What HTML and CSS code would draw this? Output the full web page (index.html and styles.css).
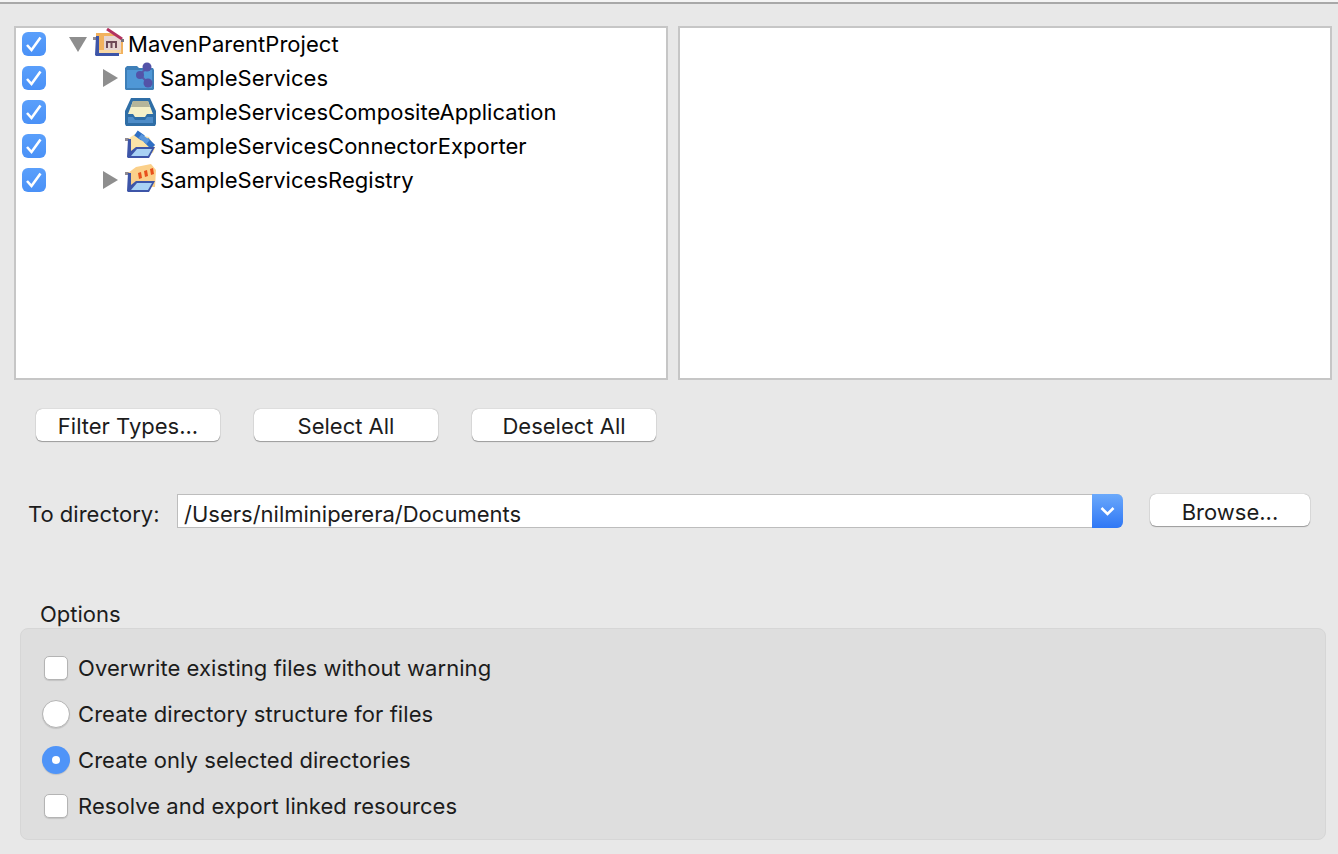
FILE: index.html
```html
<!DOCTYPE html>
<html lang="en">
<head>
	<meta charset="UTF-8">
	<meta name="viewport" content="width=device-width, initial-scale=1.0">
	<title>Export</title>
	<link rel="stylesheet" href="styles.css">
</head>
<body>
	<div class="top-line"></div>

	<div class="panes">
		<div class="pane tree">
			<div class="tree-row">
				<span class="check"><svg viewBox="0 0 24 24"><path d="M5 13l4.5 5L18.5 5.5"/></svg></span>
				<span class="twisty level-0"><span class="arrow-down"></span></span>
				<svg class="file-icon" viewBox="0 0 32 32">
					<path d="M0 9h4v3H0z" fill="#8f8a92"/>
					<path d="M3 5h14l13 6v15H3z" fill="#f2b25e"/>
					<path d="M11 8h12l5 4v11H11z" fill="#e6d5d2"/>
					<path d="M14 1l15 10" stroke="#b3315f" stroke-width="3" fill="none"/>
					<path d="M13 13h11v7h-2v-5h-2.5v5h-2v-5H15v5h-2z" fill="#6e4a58"/>
					<path d="M28 11h3v3h-3z" fill="#77707a"/>
					<path d="M6 22h22v3H6z" fill="#f8d7a4"/>
					<path d="M3 8h3v17h20v3H3l-1-1z" fill="#3d55a8"/>
				</svg>
				<span class="name">MavenParentProject</span>
			</div>
			<div class="tree-row">
				<span class="check"><svg viewBox="0 0 24 24"><path d="M5 13l4.5 5L18.5 5.5"/></svg></span>
				<span class="twisty level-1"><span class="arrow-right"></span></span>
				<svg class="file-icon" viewBox="0 0 32 32">
					<path d="M0 6l2-2h10l2 2h14l1 2v19l-1 1H1l-1-1z" fill="#3e7fb8"/>
					<path d="M2 8h25v18H2z" fill="#4f97d6"/>
					<path d="M22 5l-7 8 8 8" fill="none" stroke="#5a5aa8" stroke-width="2"/>
					<circle cx="22" cy="5" r="4.5" fill="#5353a8"/>
					<circle cx="15" cy="13" r="4" fill="#5353a8"/>
					<circle cx="23" cy="21" r="4.5" fill="#5353a8"/>
				</svg>
				<span class="name">SampleServices</span>
			</div>
			<div class="tree-row">
				<span class="check"><svg viewBox="0 0 24 24"><path d="M5 13l4.5 5L18.5 5.5"/></svg></span>
				<span class="twisty level-1"></span>
				<svg class="file-icon" viewBox="0 0 32 32">
					<path d="M6 2h19l6 13v13l-1 2H1l-1-2V15z" fill="#2f6ea6"/>
					<path d="M8 5h15l5 13h-6l-2 3H10l-2-3H3z" fill="#f5f0c8"/>
					<path d="M8 5h15l2 6H6z" fill="#b5b59a"/>
					<path d="M3 21h5l2 3h10l2-3h6v6H3z" fill="#4d8cc8"/>
				</svg>
				<span class="name">SampleServicesCompositeApplication</span>
			</div>
			<div class="tree-row">
				<span class="check"><svg viewBox="0 0 24 24"><path d="M5 13l4.5 5L18.5 5.5"/></svg></span>
				<span class="twisty level-1"></span>
				<svg class="file-icon" viewBox="0 0 32 32">
					<path d="M0 8h4v3H0z" fill="#8f8a92"/>
					<path d="M3 9l7-5 14 3 6 11-2 5H4z" fill="#fbe3a8"/>
					<path d="M11 3l7 5" stroke="#2f6fc4" stroke-width="6" fill="none"/>
					<path d="M21 10l7 7" stroke="#2f6fc4" stroke-width="6" fill="none"/>
					<path d="M15 6l8 6" stroke="#5a97de" stroke-width="5" fill="none"/>
					<path d="M3 9h3v12l5-4h19l-6 11H3l-1-1z" fill="#3d55a8"/>
					<path d="M12 19h15l-4 7H6z" fill="#a9d2f4"/>
				</svg>
				<span class="name">SampleServicesConnectorExporter</span>
			</div>
			<div class="tree-row">
				<span class="check"><svg viewBox="0 0 24 24"><path d="M5 13l4.5 5L18.5 5.5"/></svg></span>
				<span class="twisty level-1"><span class="arrow-right"></span></span>
				<svg class="file-icon" viewBox="0 0 32 32">
					<path d="M0 8h4v3H0z" fill="#8f8a92"/>
					<path d="M3 9l8-6 15-3 5 6-1 17H4z" fill="#fbd08a"/>
					<path d="M13 9l3-1 1 6-3 1zM19 7l3-1 1 6-3 1zM25 5l3-1 1 6-3 1z" fill="#e8501c"/>
					<path d="M3 9h3v12l5-4h19l-6 11H3l-1-1z" fill="#3d55a8"/>
					<path d="M12 19h15l-4 7H6z" fill="#a9d2f4"/>
				</svg>
				<span class="name">SampleServicesRegistry</span>
			</div>
		</div>
		<div class="pane"></div>
	</div>

	<div class="button-row">
		<button class="btn">Filter Types...</button>
		<button class="btn">Select All</button>
		<button class="btn">Deselect All</button>
	</div>

	<div class="directory-row">
		<label class="directory-label">To directory:</label>
		<div class="combo">
			<span class="combo-value">/Users/nilminiperera/Documents</span>
			<span class="combo-arrow"><svg viewBox="0 0 31 34"><path d="M9.5 14l6 6 6-6"/></svg></span>
		</div>
		<button class="btn browse">Browse...</button>
	</div>

	<div class="options-title">Options</div>
	<div class="options">
		<div class="option"><span class="box"></span>Overwrite existing files without warning</div>
		<div class="option"><span class="radio"></span>Create directory structure for files</div>
		<div class="option"><span class="radio on"></span>Create only selected directories</div>
		<div class="option"><span class="box"></span>Resolve and export linked resources</div>
	</div>
</body>
</html>
```

FILE: styles.css
```css
html, body {
	margin: 0;
	padding: 0;
	background-color: #e8e8e8;
	font-family: Inter, "Liberation Sans", sans-serif;
	font-size: 22px;
	color: #1c1c1c;
}

body {
	width: 1338px;
	height: 854px;
	overflow: hidden;
}

.top-line {
	height: 2px;
	border-bottom: 2px solid #a8a8a8;
	background-color: #f4f4f4;
}

/* tree + empty list */
.panes {
	display: flex;
	gap: 10px;
	padding: 22px 6px 0 14px;
}

.pane {
	flex: 1;
	height: 350px;
	background-color: #fff;
	border: 2px solid #c6c6c6;
}

.tree-row {
	display: flex;
	align-items: center;
	height: 34px;
	padding-left: 6px;
	color: #000;
}

.tree-row:first-child {
	margin-top: -1px;
}

.check {
	display: block;
	width: 24px;
	height: 24px;
	border-radius: 6px;
	background: linear-gradient(#5a9ffb, #4a91f7);
}

.check svg {
	display: block;
	width: 24px;
	height: 24px;
	fill: none;
	stroke: #fff;
	stroke-width: 2.6;
}

.twisty {
	display: flex;
	align-items: center;
	width: 24px;
	height: 24px;
}

.level-0 {
	margin-left: 23px;
}

.level-1 {
	margin-left: 57px;
	width: 22px;
}

.arrow-down {
	width: 0;
	height: 0;
	border-left: 9px solid transparent;
	border-right: 9px solid transparent;
	border-top: 15px solid #8e8e8e;
}

.arrow-right {
	width: 0;
	height: 0;
	border-top: 9.5px solid transparent;
	border-bottom: 9.5px solid transparent;
	border-left: 15px solid #8e8e8e;
}

.file-icon {
	width: 32px;
	height: 32px;
	flex: none;
	filter: blur(0.4px);
}

.name {
	margin-left: 3px;
	letter-spacing: 0.03px;
}

/* buttons */
.button-row {
	display: flex;
	gap: 34px;
	padding: 29px 0 0 36px;
}

.btn {
	width: 184px;
	height: 32px;
	padding: 1px 0 0;
	border: 0;
	border-radius: 6px;
	background-color: #fff;
	box-shadow: 0 0 1px rgba(0, 0, 0, 0.45), 0 1px 1px rgba(0, 0, 0, 0.3);
	font: inherit;
	color: #1c1c1c;
}

.directory-row {
	display: flex;
	align-items: center;
	height: 34px;
	margin-top: 53px;
	padding-left: 28px;
}

.directory-label {
	width: 149px;
	padding-top: 5px;
}

.combo {
	display: flex;
	align-items: center;
	width: 946px;
	height: 34px;
	box-sizing: border-box;
	border: 1px solid #bdbdbd;
	border-right: 0;
	border-radius: 0 6px 6px 0;
	background-color: #fff;
}

.combo-value {
	flex: 1;
	padding: 5px 0 0 6px;
}

.combo-arrow {
	width: 31px;
	height: 34px;
	margin-top: -1px;
	margin-bottom: -1px;
	border-radius: 0 6px 6px 0;
	background: linear-gradient(#6ba9fb, #2f77f5);
}

.combo-arrow svg {
	display: block;
	width: 31px;
	height: 34px;
	fill: none;
	stroke: #fff;
	stroke-width: 2.6;
}

.browse {
	width: 160px;
	margin-left: 27px;
	margin-top: -2px;
	padding-top: 4px;
}

/* options group */
.options-title {
	margin-top: 73px;
	padding-left: 40px;
	line-height: 26px;
}

.options {
	box-sizing: border-box;
	height: 212px;
	margin: 1px 12px 0 20px;
	padding: 16px 0 0 21px;
	border: 1px solid #d6d6d6;
	border-radius: 8px;
	background-color: #dedede;
	letter-spacing: 0.06px;
}

.option {
	display: flex;
	align-items: center;
	height: 46px;
}

.box,
.radio {
	flex: none;
	box-sizing: border-box;
	background-color: #fff;
	border: 1px solid #b4b4b4;
	box-shadow: 0 1px 1px rgba(0, 0, 0, 0.12);
}

.box {
	width: 24px;
	height: 24px;
	margin: 0 10px 0 2px;
	border-radius: 5px;
}

.radio {
	display: flex;
	align-items: center;
	justify-content: center;
	width: 28px;
	height: 28px;
	margin-right: 8px;
	border-radius: 50%;
}

.radio.on {
	border: 0;
	background-color: #4f94f8;
}

.radio.on::after {
	content: "";
	width: 8px;
	height: 8px;
	border-radius: 50%;
	background-color: #fff;
}
```
